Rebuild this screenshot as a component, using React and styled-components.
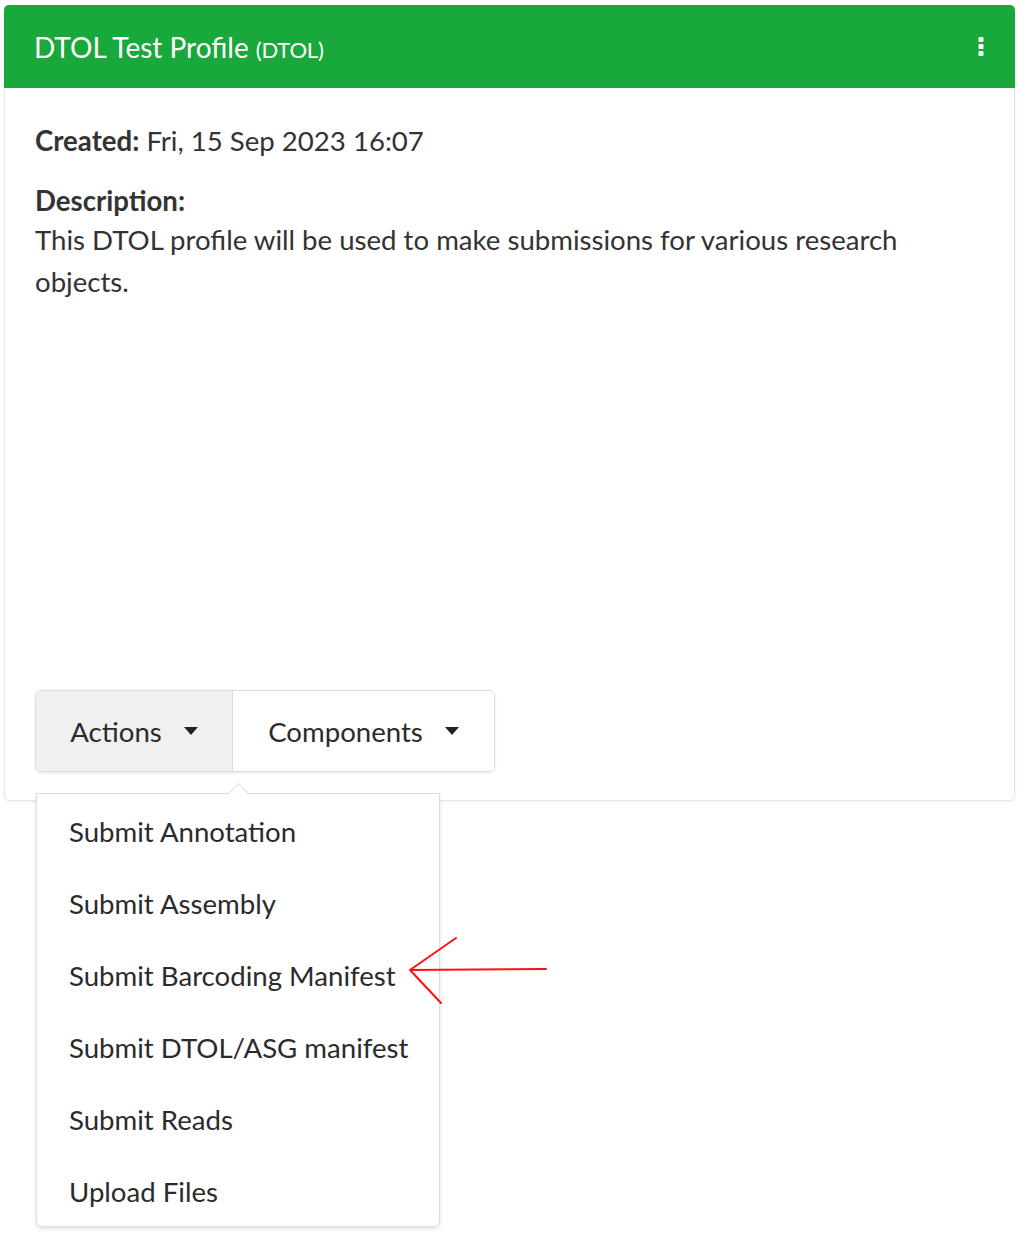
import React from 'react';
import styled, { createGlobalStyle } from 'styled-components';

const GlobalStyle = createGlobalStyle`
  body {
    margin: 0;
    background: #ffffff;
    font-family: Lato, "Open Sans", sans-serif;
    color: #333333;
  }
`;

const actions = [
  'Submit Annotation',
  'Submit Assembly',
  'Submit Barcoding Manifest',
  'Submit DTOL/ASG manifest',
  'Submit Reads',
  'Upload Files',
];

const Caret = () => (
  <svg width="14" height="8" viewBox="0 0 14 8">
    <path d="M0 0 L14 0 L7 8 Z" fill="#222" />
  </svg>
);

const Kebab = () => (
  <svg width="6" height="19" viewBox="0 0 6 19">
    <rect x="0.5" y="0" width="5" height="5" rx="1" fill="#fff" />
    <rect x="0.5" y="7" width="5" height="5" rx="1" fill="#fff" />
    <rect x="0.5" y="14" width="5" height="5" rx="1" fill="#fff" />
  </svg>
);

const App = () => (
  <Page>
    <GlobalStyle />
    <Card>
      <Header>
        <Title>
          DTOL Test Profile <Small>(DTOL)</Small>
        </Title>
        <Kebab />
      </Header>
      <Body>
        <div>
          <Line>
            <b>Created:</b> Fri, 15 Sep 2023 16:07
          </Line>
          <Label>Description:</Label>
          <Text>
            This DTOL profile will be used to make submissions for various research
            objects.
          </Text>
        </div>
        <ButtonGroup>
          <GroupButton active width={196}>
            Actions <Caret />
          </GroupButton>
          <GroupButton width={262}>
            Components <Caret />
          </GroupButton>
          <Menu>
            <Pointer />
            {actions.map((a) => (
              <MenuItem key={a}>{a}</MenuItem>
            ))}
          </Menu>
        </ButtonGroup>
      </Body>
    </Card>
    <Arrow width="150" height="80" viewBox="0 0 150 80">
      <path
        d="M3 34 L139 33 M3 34 L49 2 M3 34 L34 67"
        stroke="#ff1010"
        strokeWidth="2"
        fill="none"
        strokeLinecap="round"
      />
    </Arrow>
  </Page>
);

const Page = styled.div`
  position: relative;
  padding: 5px 11px 0 4px;
  height: 1238px;
  box-sizing: border-box;
`;

const Card = styled.div`
  border: 1px solid #e3e6ea;
  border-radius: 6px;
  box-shadow: 0 1px 3px rgba(0, 0, 0, 0.06);
  background: #fff;
`;

const Header = styled.div`
  display: flex;
  align-items: center;
  justify-content: space-between;
  height: 83px;
  padding: 0 31px 0 30px;
  background: #19a83b;
  border-radius: 5px 5px 0 0;
  margin: -1px -1px 0;
`;

const Title = styled.div`
  color: #fff;
  font-size: 28px;
`;

const Small = styled.span`
  font-size: 22px;
  letter-spacing: -0.2px;
`;

const Body = styled.div`
  display: flex;
  flex-direction: column;
  justify-content: space-between;
  height: 712px;
  box-sizing: border-box;
  padding: 32px 30px 28px;
`;

const Line = styled.div`
  font-size: 27.6px;
  line-height: 42px;
`;

const Label = styled(Line)`
  font-weight: bold;
  margin-top: 18px;
`;

const Text = styled(Line)`
  margin-top: -3px;
`;

const ButtonGroup = styled.div`
  position: relative;
  display: flex;
  align-self: flex-start;
  border: 1px solid #dcdcdc;
  border-radius: 6px;
  box-shadow: 0 1px 3px rgba(0, 0, 0, 0.1);
`;

const GroupButton = styled.div`
  display: flex;
  align-items: center;
  justify-content: center;
  gap: 22px;
  width: ${(p) => p.width}px;
  height: 80px;
  box-sizing: border-box;
  font-size: 27.6px;
  color: #2b2b2b;
  background: ${(p) => (p.active ? '#f0f0f0' : '#fff')};
  border-radius: ${(p) => (p.active ? '5px 0 0 5px' : '0 5px 5px 0')};
  & + & {
    border-left: 1px solid #dcdcdc;
  }
`;

const Menu = styled.div`
  position: absolute;
  top: 102px;
  left: 0;
  width: 404px;
  height: 434px;
  box-sizing: border-box;
  padding-top: 1px;
  background: #fff;
  border: 1px solid #dcdcdc;
  border-radius: 0 0 6px 6px;
  box-shadow: 0 2px 4px rgba(0, 0, 0, 0.12);
`;

const Pointer = styled.div`
  position: absolute;
  top: -8px;
  left: 194px;
  width: 14px;
  height: 14px;
  background: #fff;
  border-left: 1px solid #dcdcdc;
  border-top: 1px solid #dcdcdc;
  transform: rotate(45deg);
`;

const MenuItem = styled.div`
  height: 72px;
  display: flex;
  align-items: center;
  padding-left: 32px;
  font-size: 27.6px;
  color: #2b2b2b;
`;

const Arrow = styled.svg`
  position: absolute;
  left: 407px;
  top: 936px;
`;

export default App;
